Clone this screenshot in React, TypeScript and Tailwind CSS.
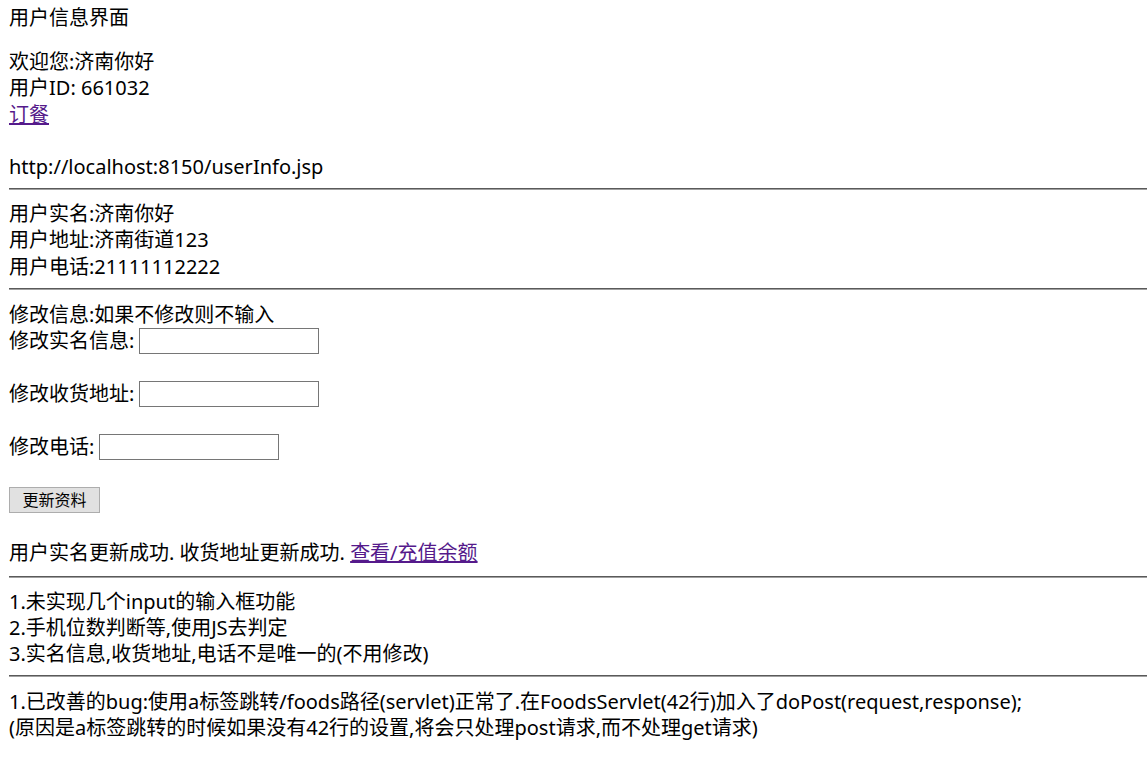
import React from 'react';

const Rule: React.FC<{ className?: string }> = ({ className = '' }) => (
  <div className={`border-t border-t-[#5a5a5a] border-b border-b-[#a0a0a0] ${className}`} />
);

const Field: React.FC<{ label: string; className?: string }> = ({ label, className = '' }) => (
  <div className={`flex h-[26px] items-center gap-[5px] ${className}`}>
    <span>{label}</span>
    <input
      type="text"
      className="h-[26px] w-[180px] border border-[#767676] bg-white px-1 text-[16px] outline-none"
    />
  </div>
);

export default function App() {
  return (
    <div
      className="min-h-screen bg-white pl-[9px] pt-[5px] text-[20px] leading-[26px] text-black"
      style={{ fontFamily: '"Noto Sans", "Noto Sans CJK SC", sans-serif' }}
    >
      <div>用户信息界面</div>

      <div className="mt-[18px]">欢迎您:济南你好</div>
      <div>用户ID: 661032</div>
      <div className="mt-[1px]">
        <a href="#" className="text-[#551a8b] underline">订餐</a>
      </div>

      <div className="mt-[26px]">http://localhost:8150/userInfo.jsp</div>
      <Rule className="mt-[8px]" />

      <div className="mt-[11px]">用户实名:济南你好</div>
      <div>用户地址:济南街道123</div>
      <div className="mt-[1px]">用户电话:21111112222</div>
      <Rule className="mt-[8px]" />

      <div className="mt-[12px]">修改信息:如果不修改则不输入</div>
      <Field label="修改实名信息:" />
      <Field label="修改收货地址:" className="mt-[27px]" />
      <Field label="修改电话:" className="mt-[27px]" />

      <div className="mt-[27px] flex h-[26px] items-center">
        <button
          type="button"
          className="h-[26px] w-[91px] border border-[#adadad] bg-[#e1e1e1] text-[16px] leading-none text-black"
        >
          更新资料
        </button>
      </div>

      <div className="mt-[27px]">
        用户实名更新成功. 收货地址更新成功.{' '}
        <a href="#" className="text-[#551a8b] underline">查看/充值余额</a>
      </div>
      <Rule className="mt-[10px]" />

      <div className="mt-[11px]">1.未实现几个input的输入框功能</div>
      <div>2.手机位数判断等,使用JS去判定</div>
      <div>3.实名信息,收货地址,电话不是唯一的(不用修改)</div>
      <Rule className="mt-[8px]" />

      <div className="mt-[12px]">
        1.已改善的bug:使用a标签跳转/foods路径(servlet)正常了.在FoodsServlet(42行)加入了doPost(request,response);
      </div>
      <div>(原因是a标签跳转的时候如果没有42行的设置,将会只处理post请求,而不处理get请求)</div>
    </div>
  );
}
